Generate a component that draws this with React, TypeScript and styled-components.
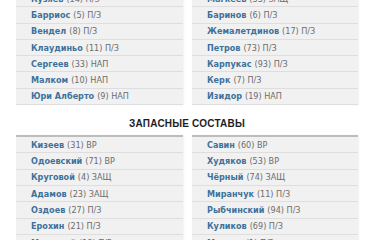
import React from "react";
import styled, { createGlobalStyle } from "styled-components";

const Global = createGlobalStyle`
  html, body { margin: 0; padding: 0; background: #ffffff; }
  body { font-family: "DejaVu Sans", "Noto Sans", sans-serif; overflow: hidden; }
`;

const Page = styled.div`
  width: 375px;
  padding: 0 17px 0 16px;
  box-sizing: border-box;
  margin-top: -11px;
`;

const Table = styled.div`
  display: grid;
  grid-template-columns: 167px 166px;
  column-gap: 9px;
`;

const Column = styled.div`
  display: flex;
  flex-direction: column;
  border-top: 2px solid #bdbdbd;
  box-shadow: 1px 0 2px rgba(0, 0, 0, 0.06);
`;

const Row = styled.div`
  height: 16.3px;
  box-sizing: border-box;
  display: flex;
  align-items: center;
  padding-left: 15px;
  background: #f1f1f1;
  border-bottom: 1px solid #dedede;
  font-size: 8.1px;
  color: #6c6c6c;
  white-space: nowrap;
`;

const Name = styled.span`
  color: #3d719b;
  font-weight: bold;
  margin-right: 3px;
`;

const Title = styled.div`
  text-align: center;
  font-family: "Liberation Sans", Arial, sans-serif;
  font-size: 10px;
  font-weight: bold;
  color: #1e1e1e;
  line-height: 14px;
  padding-top: 12px;
  margin-bottom: 4px;
  letter-spacing: 0.2px;
`;

type P = [string, string];

const mainLeft: P[] = [
  ["Кузяев", "(14) П/З"],
  ["Барриос", "(5) П/З"],
  ["Вендел", "(8) П/З"],
  ["Клаудиньо", "(11) П/З"],
  ["Сергеев", "(33) НАП"],
  ["Малком", "(10) НАП"],
  ["Юри Алберто", "(9) НАП"],
];
const mainRight: P[] = [
  ["Магкеев", "(33) ЗАЩ"],
  ["Баринов", "(6) П/З"],
  ["Жемалетдинов", "(17) П/З"],
  ["Петров", "(73) П/З"],
  ["Карпукас", "(93) П/З"],
  ["Керк", "(7) П/З"],
  ["Изидор", "(19) НАП"],
];
const subLeft: P[] = [
  ["Кизеев", "(31) ВР"],
  ["Одоевский", "(71) ВР"],
  ["Круговой", "(4) ЗАЩ"],
  ["Адамов", "(23) ЗАЩ"],
  ["Оздоев", "(27) П/З"],
  ["Ерохин", "(21) П/З"],
  ["Мостовой", "(18) П/З"],
];
const subRight: P[] = [
  ["Савин", "(60) ВР"],
  ["Худяков", "(53) ВР"],
  ["Чёрный", "(74) ЗАЩ"],
  ["Миранчук", "(11) П/З"],
  ["Рыбчинский", "(94) П/З"],
  ["Куликов", "(69) П/З"],
  ["Мадуев", "(1) П/З"],
];

const Col = ({ items }: { items: P[] }) => (
  <Column>
    {items.map(([n, r]) => (
      <Row key={n}>
        <Name>{n}</Name>
        {r}
      </Row>
    ))}
  </Column>
);

export default function App() {
  return (
    <>
      <Global />
      <Page>
        <Table>
          <Col items={mainLeft} />
          <Col items={mainRight} />
        </Table>
        <Title>ЗАПАСНЫЕ СОСТАВЫ</Title>
        <Table>
          <Col items={subLeft} />
          <Col items={subRight} />
        </Table>
      </Page>
    </>
  );
}
